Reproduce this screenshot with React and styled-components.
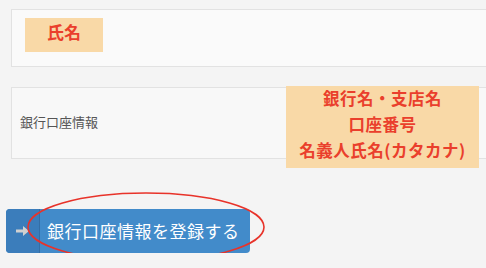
import styled, { createGlobalStyle } from "styled-components";

const GlobalStyle = createGlobalStyle`
  html, body {
    margin: 0;
    padding: 0;
    background: #f4f4f4;
    overflow: hidden;
  }
  body {
    font-family: "Noto Sans CJK JP", "Noto Sans", sans-serif;
  }
`;

const Page = styled.div`
  width: 486px;
  overflow: hidden;
  padding-top: 9px;
`;

const Panel = styled.div`
  position: relative;
  margin-left: 11px;
  width: 500px;
  height: ${(p) => p.h}px;
  box-sizing: border-box;
  border: 1px solid #e2e2e2;
  background: ${(p) => p.bg || "#fafafa"};
  display: flex;
  align-items: ${(p) => (p.center ? "center" : "flex-start")};
  padding: ${(p) => p.pad};
  margin-bottom: ${(p) => p.mb}px;
`;

const Tag = styled.div`
  width: 78px;
  height: 34px;
  background: #f9d9a7;
  color: #ea3f2c;
  font-weight: 700;
  font-size: 17px;
  display: flex;
  align-items: center;
  justify-content: center;
  padding-bottom: 7px;
  box-sizing: border-box;
`;

const Label = styled.div`
  font-size: 13px;
  color: #555;
  padding-bottom: 4px;
`;

const Note = styled.div`
  position: absolute;
  left: 274px;
  top: -2px;
  width: 193px;
  height: 82px;
  background: #f9d9a7;
  color: #ea3f2c;
  font-weight: 700;
  font-size: 16.5px;
  line-height: 26px;
  display: flex;
  flex-direction: column;
  align-items: center;
  justify-content: center;
  padding-bottom: 6px;
  box-sizing: border-box;
  letter-spacing: 0.5px;
`;

const ButtonWrap = styled.div`
  position: relative;
  margin-left: 6px;
  width: 244px;
`;

const Button = styled.button`
  display: flex;
  align-items: stretch;
  width: 244px;
  height: 44px;
  padding: 0;
  border: 0;
  border-radius: 4px;
  overflow: hidden;
  background: #428bca;
  cursor: pointer;
  font-family: inherit;
`;

const IconPart = styled.span`
  width: 33px;
  background: #3b7dbb;
  border-right: 1px solid #346ea6;
  display: flex;
  align-items: center;
  justify-content: center;
`;

const Text = styled.span`
  flex: 1;
  display: flex;
  align-items: center;
  padding-left: 7px;
  color: #fff;
  font-size: 17px;
  letter-spacing: 0.5px;
  padding-bottom: 1px;
`;

const Ellipse = styled.svg`
  position: absolute;
  left: 20px;
  top: -17px;
  pointer-events: none;
  overflow: visible;
`;

export default function App() {
  return (
    <>
      <GlobalStyle />
      <Page>
        <Panel h={58} pad="8px 13px" mb={20}>
          <Tag>氏名</Tag>
        </Panel>
        <Panel h={72} pad="0 8px" mb={50} center bg="#f8f8f8">
          <Label>銀行口座情報</Label>
          <Note>
            <div>銀行名・支店名</div>
            <div>口座番号</div>
            <div>名義人氏名(カタカナ)</div>
          </Note>
        </Panel>
        <ButtonWrap>
          <Button>
            <IconPart>
              <svg width="14" height="12" viewBox="0 0 14 12">
                <path d="M0 4.5h7V1l6 5-6 5V7.5H0z" fill="#d0d0d0" />
              </svg>
            </IconPart>
            <Text>銀行口座情報を登録する</Text>
          </Button>
          <Ellipse width="240" height="72">
            <ellipse cx="120" cy="35" rx="118" ry="34" fill="none" stroke="#e8332a" strokeWidth="1.6" />
          </Ellipse>
        </ButtonWrap>
      </Page>
    </>
  );
}
